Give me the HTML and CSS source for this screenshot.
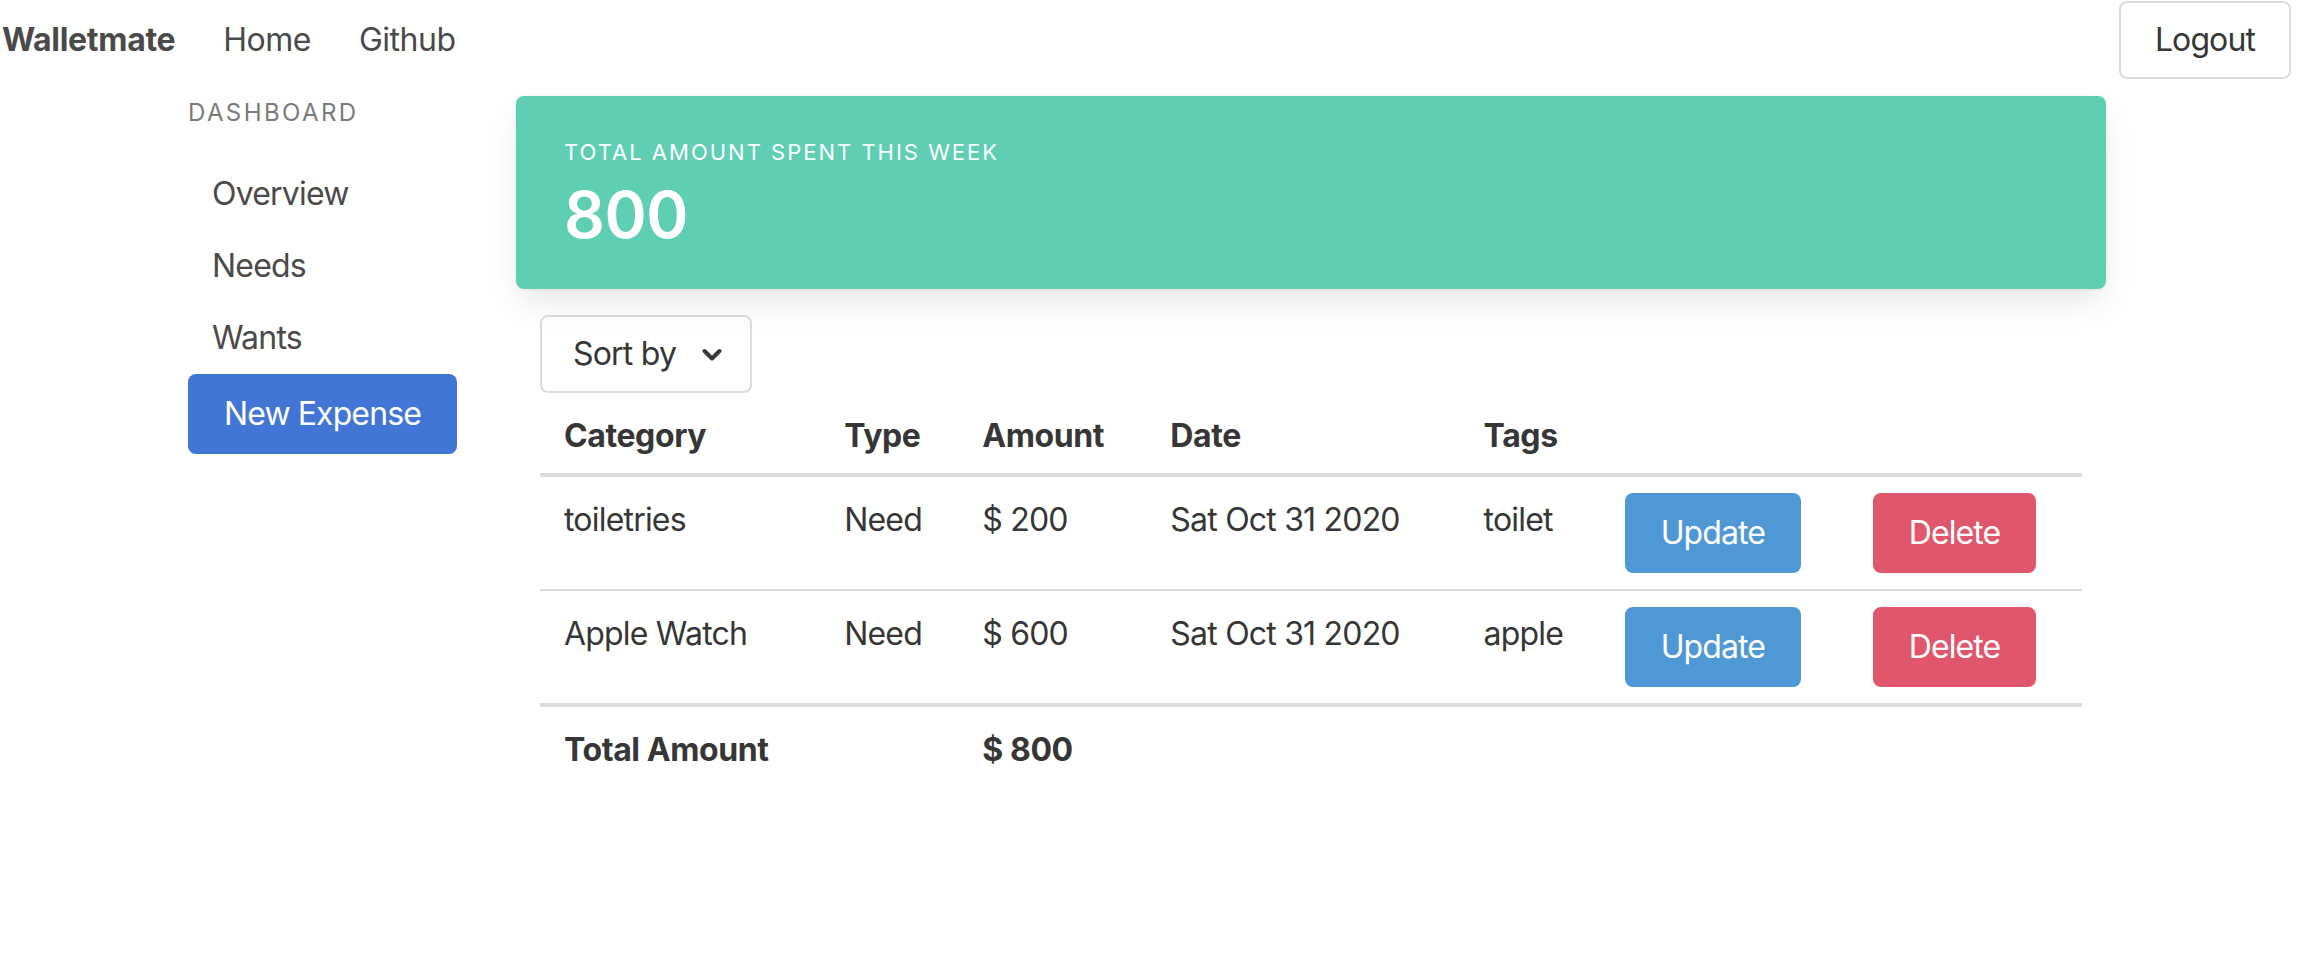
FILE: index.html
```html
<!DOCTYPE html>
<html lang="en">
<head>
<meta charset="utf-8">
<title>Walletmate</title>
<link rel="stylesheet" href="styles.css">
</head>
<body>
<nav class="navbar">
  <div class="nav-left">
    <a class="brand">Walletmate</a>
    <a class="nav-item">Home</a>
    <a class="nav-item">Github</a>
  </div>
  <button class="btn btn-outline">Logout</button>
</nav>
<div class="layout">
  <aside class="sidebar">
    <p class="menu-label">Dashboard</p>
    <ul class="menu-list">
      <li><a>Overview</a></li>
      <li><a>Needs</a></li>
      <li><a>Wants</a></li>
    </ul>
    <button class="btn btn-link">New Expense</button>
  </aside>
  <main class="main">
    <div class="summary">
      <p class="heading">Total amount spent this week</p>
      <p class="title">800</p>
    </div>
    <div class="list">
      <div class="dropdown">
        <span>Sort by</span>
        <svg class="chev" width="20" height="14" viewBox="0 0 20 14"><path d="M2.5 3 L10 10.5 L17.5 3" fill="none" stroke="#363636" stroke-width="4" stroke-linecap="round" stroke-linejoin="round"/></svg>
      </div>
      <table class="table">
        <colgroup>
          <col class="c1"><col class="c2"><col class="c3"><col class="c4"><col class="c5"><col class="c6"><col class="c7">
        </colgroup>
        <thead>
          <tr><th>Category</th><th>Type</th><th>Amount</th><th>Date</th><th>Tags</th><th></th><th></th></tr>
        </thead>
        <tbody>
          <tr><td>toiletries</td><td>Need</td><td>$ 200</td><td>Sat Oct 31 2020</td><td>toilet</td><td class="act"><button class="btn btn-info">Update</button></td><td class="act"><button class="btn btn-danger">Delete</button></td></tr>
          <tr><td>Apple Watch</td><td>Need</td><td>$ 600</td><td>Sat Oct 31 2020</td><td>apple</td><td class="act"><button class="btn btn-info">Update</button></td><td class="act"><button class="btn btn-danger">Delete</button></td></tr>
        </tbody>
        <tfoot>
          <tr><th>Total Amount</th><th></th><th>$ 800</th><th></th><th></th><th></th><th></th></tr>
        </tfoot>
      </table>
    </div>
  </main>
</div>
</body>
</html>
```

FILE: styles.css
```css
* { box-sizing: border-box; }
html, body { margin: 0; padding: 0; background: #fff; }
body {
  font-family: Inter, "Noto Sans", "Liberation Sans", sans-serif;
  font-size: 32px;
  line-height: 1.5;
  letter-spacing: -0.8px;
  color: #4a4a4a;
}
p, ul { margin: 0; padding: 0; }
a { color: inherit; text-decoration: none; }

.navbar {
  height: 80px;
  display: flex;
  align-items: center;
  justify-content: space-between;
  padding: 0 7px 0 2px;
}
.nav-left { display: flex; align-items: center; }
.brand { font-weight: 700; letter-spacing: -0.3px; padding-right: 24px; color: #4a4a4a; }
.nav-item { padding: 0 24px; letter-spacing: -0.5px; }

.btn {
  font-family: inherit;
  font-size: 32px;
  line-height: 1.5;
  letter-spacing: -0.9px;
  height: 80px;
  padding: 0 34px;
  border: 2px solid transparent;
  border-radius: 8px;
  display: inline-flex;
  align-items: center;
  justify-content: center;
  cursor: pointer;
  color: #fff;
}
.btn-outline { background: #fff; border-color: #dbdbdb; color: #363636; height: 78px; }
.btn-link { background: #4176d6; }
.btn-info { background: #4f98d6; }
.btn-danger { background: #e0566a; }

.layout {
  display: flex;
  gap: 48px;
  padding: 16px 0 0 188px;
}
.sidebar { width: 280px; flex: none; }
.menu-label {
  font-size: 24px;
  line-height: 1.25;
  letter-spacing: 0.1em;
  text-transform: uppercase;
  color: #7a7a7a;
  padding-top: 2px;
  margin-bottom: 30px;
}
.menu-list { list-style: none; }
.menu-list a {
  display: block;
  line-height: 1.25;
  padding: 16px 24px;
  color: #4a4a4a;
}

.main { width: 1590px; flex: none; }
.summary {
  background: #5ecfb3;
  border-radius: 8px;
  padding: 40px 48px 38px;
  color: #fff;
  box-shadow: 0 16px 32px -4px rgba(10, 10, 10, 0.1), 0 0 0 2px rgba(10, 10, 10, 0.02);
}
.heading {
  font-size: 22px;
  letter-spacing: 2px;
  text-transform: uppercase;
  line-height: 33px;
  margin-bottom: 10px;
}
.title {
  font-size: 64px;
  font-weight: 600;
  letter-spacing: -0.5px;
  line-height: 72px;
}

.list { padding: 26px 24px 0; }
.dropdown {
  display: inline-flex;
  align-items: center;
  gap: 26px;
  height: 78px;
  padding: 0 28px 0 31px;
  border: 2px solid #dbdbdb;
  border-radius: 8px;
  color: #363636;
}
.chev { display: block; margin-top: 2px; }

.table {
  width: 100%;
  border-collapse: collapse;
  color: #363636;
  table-layout: fixed;
}
.c1 { width: 280px; } .c2 { width: 138px; } .c3 { width: 188px; }
.c4 { width: 313px; } .c5 { width: 141px; } .c6 { width: 248px; } .c7 { width: 233px; }
.table th, .table td {
  text-align: left;
  vertical-align: top;
  padding: 19px 24px 13px;
  line-height: 48px;
  border-bottom: 2px solid #dbdbdb;
  white-space: nowrap;
}
.table td.act { padding-top: 16px; padding-bottom: 16px; }
.table th { font-weight: 700; letter-spacing: -0.4px; }
.table thead th { border-bottom-width: 4px; }
.table tbody tr:last-child td { border-bottom: 0; }
.table tfoot th { border-top: 4px solid #dbdbdb; border-bottom: 0; }
.table td .btn { vertical-align: top; }
```
